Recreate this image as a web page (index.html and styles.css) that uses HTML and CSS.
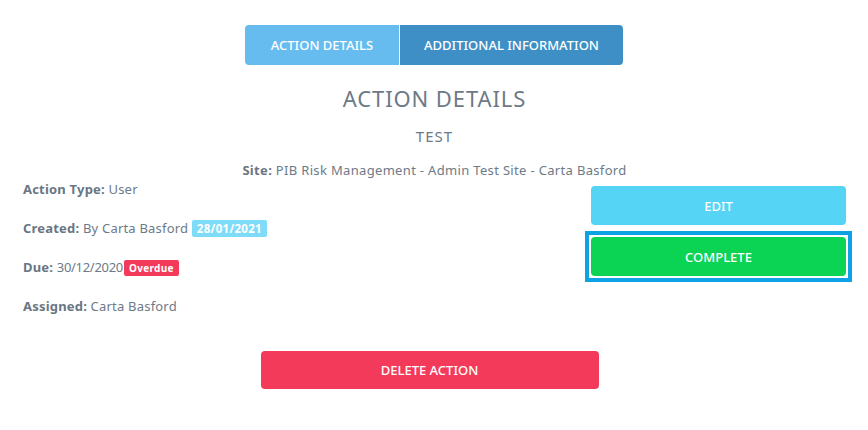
FILE: index.html
```html
<!DOCTYPE html>
<html>
<head>
<meta charset="utf-8">
<link rel="stylesheet" href="styles.css">
</head>
<body>
<div class="page">
  <div class="tabs">
    <div class="tab tab-active">ACTION DETAILS</div>
    <div class="tab tab-other">ADDITIONAL INFORMATION</div>
  </div>
  <h1 class="title">ACTION DETAILS</h1>
  <h2 class="subtitle">TEST</h2>
  <p class="site"><b>Site:</b> PIB Risk Management - Admin Test Site - Carta Basford</p>
  <div class="main">
    <div class="details">
      <p class="row"><b>Action Type:</b> User</p>
      <p class="row"><b>Created:</b> By Carta Basford <span class="badge badge-date">28/01/2021</span></p>
      <p class="row"><b>Due:</b> <span class="due-date">30/12/2020</span><span class="badge badge-overdue">Overdue</span></p>
      <p class="row"><b>Assigned:</b> Carta Basford</p>
    </div>
    <div class="actions">
      <button class="btn btn-edit">EDIT</button>
      <div class="focus-ring">
        <button class="btn btn-complete">COMPLETE</button>
      </div>
    </div>
  </div>
  <div class="delete-wrap">
    <button class="btn btn-delete">DELETE ACTION</button>
  </div>
</div>
</body>
</html>
```
FILE: styles.css
```css
* { box-sizing: border-box; }
html, body { margin: 0; padding: 0; background: #fff; }
body {
  font-family: "Noto Sans", "Open Sans", sans-serif;
  color: #6d7a87;
  width: 868px;
  height: 430px;
  overflow: hidden;
}
.page { padding: 25px 22px 0 23px; }
.tabs {
  display: flex;
  justify-content: center;
  margin-left: -1px;
}
.tab {
  height: 40px;
  display: flex;
  align-items: center;
  justify-content: center;
  color: #fff;
  font-size: 13px;
  font-weight: 500;
}
.tab-active {
  width: 155px;
  background: #66bcef;
  border-radius: 4px 0 0 4px;
  border-right: 1px solid #fff;
}
.tab-other {
  width: 223px;
  background: #3d8fc6;
  border-radius: 0 4px 4px 0;
}
.title {
  margin: 20px 0 0;
  text-align: center;
  font-size: 22px;
  font-weight: 400;
  line-height: 26px;
  letter-spacing: 0.9px;
}
.subtitle {
  margin: 15px 0 0;
  text-align: center;
  font-size: 15px;
  font-weight: 400;
  line-height: 20px;
  letter-spacing: 1px;
}
.site {
  margin: 15px 0 0;
  text-align: center;
  font-size: 13px;
  line-height: 18px;
  letter-spacing: 0.33px;
}
b { font-weight: 700; color: #6a7683; }
.main {
  display: flex;
  justify-content: space-between;
  align-items: flex-start;
}
.details { padding-top: 1px; }
.row {
  margin: 0 0 21px;
  font-size: 13px;
  line-height: 18px;
  letter-spacing: 0.2px;
}
.row:last-child { margin-bottom: 0; }
.due-date { letter-spacing: -0.3px; }
.badge {
  display: inline-block;
  color: #fff;
  font-weight: 700;
  border-radius: 2px;
  vertical-align: 0;
  letter-spacing: 0.3px;
}
.badge-date {
  background: #7fdcf8;
  font-size: 11.5px;
  line-height: 17px;
  padding: 0 5px;
}
.badge-overdue {
  background: #f43a5a;
  font-size: 10px;
  line-height: 16px;
  padding: 0 5px;
  margin-left: 1px;
}
.actions {
  width: 255px;
  display: flex;
  flex-direction: column;
  gap: 6px;
  margin-top: 7px;
}
.btn {
  border: none;
  border-radius: 4px;
  color: #fff;
  font-family: inherit;
  font-size: 13px;
  font-weight: 500;
  height: 39px;
  width: 100%;
  padding: 0;
  display: block;
}
.btn-edit { background: #56d4f5; }
.focus-ring {
  margin: 0 -6px;
  border: 4px solid #0ca2e4;
  padding: 2px;
  background: #fff;
}
.btn-complete { background: #0bd454; }
.delete-wrap {
  display: flex;
  justify-content: center;
  padding-right: 10px;
  margin-top: 36px;
}
.btn-delete {
  width: 338px;
  height: 38px;
  background: #f43a5a;
}
```
